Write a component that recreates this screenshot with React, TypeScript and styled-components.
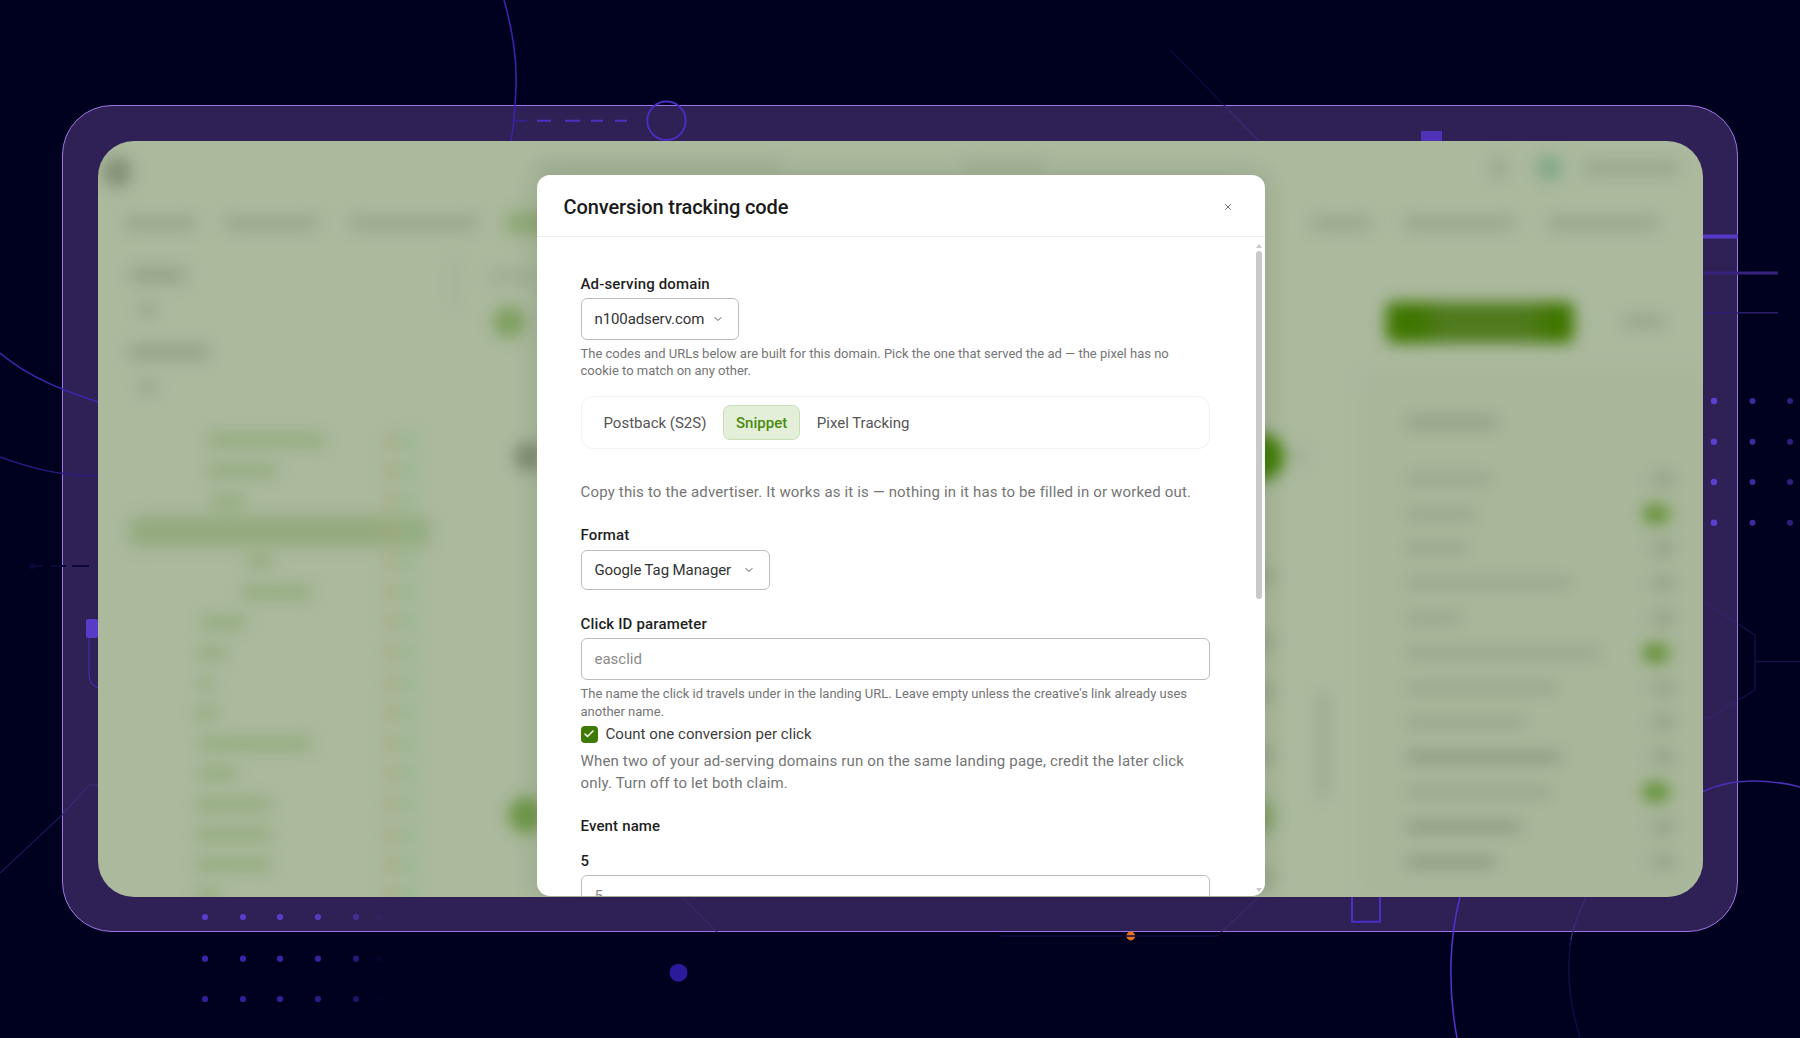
import React from 'react'
import styled, { createGlobalStyle } from 'styled-components'
import { Check, ChevronDown, X } from 'lucide-react'

const GlobalStyle = createGlobalStyle`
  html, body {
    margin: 0;
    padding: 0;
    background: #00001f;
  }
  * {
    box-sizing: border-box;
  }
`

const Page = styled.div`
  position: relative;
  width: 1800px;
  height: 1038px;
  padding: 105px 62px 106px;
  overflow: hidden;
  background: #00001f;
  font-family: Roboto, "Open Sans", sans-serif;
`

const Frame = styled.div`
  width: 100%;
  height: 100%;
  padding: 34.5px;
  border: 1.5px solid #a074e6;
  border-radius: 50px;
  background: #2f2056;
`

const Deco = styled.svg`
  position: absolute;
  top: 0;
  left: 0;
  z-index: 1;
`

const Panel = styled.div`
  position: relative;
  z-index: 2;
  width: 100%;
  height: 100%;
  overflow: hidden;
  border-radius: 36px;
  background: #abb99d;
`

/* the app behind the dialog, out of focus */
const Backdrop = styled.div`
  display: flex;
  flex-direction: column;
  height: 100%;
  filter: blur(7.5px);
`

const TopBar = styled.div`
  display: flex;
  align-items: center;
  height: 54px;
  padding: 0 32px 0 4px;
`

const Blob = styled.div<{ $w: number; $h?: number; $c?: string; $ml?: number }>`
  flex: none;
  width: ${p => p.$w}px;
  height: ${p => p.$h ?? 12}px;
  margin-left: ${p => p.$ml ?? 0}px;
  border-radius: 4px;
  background: ${p => p.$c ?? '#95a388'};
`

const Avatar = styled.div`
  flex: none;
  width: 30px;
  height: 32px;
  margin-top: 8px;
  border-radius: 50%;
  background: #849277;
`

const Spot = styled.div<{ $d: number; $c: string; $ml?: number }>`
  flex: none;
  width: ${p => p.$d}px;
  height: ${p => p.$d}px;
  margin-left: ${p => p.$ml ?? 0}px;
  border-radius: 50%;
  background: ${p => p.$c};
`

const NavBar = styled.div`
  display: flex;
  align-items: center;
  height: 56px;
`

const Main = styled.div`
  flex: 1;
  display: flex;
  min-height: 0;
`

const LeftCol = styled.div`
  flex: none;
  width: 331px;
  padding: 16px 0 0 32px;
`

const Heading = styled(Blob)`
  margin-bottom: 21px;
  height: 16px;
`

const SmallMark = styled(Blob)`
  margin-bottom: 28px;
  margin-left: 9px;
`

const Tree = styled.div`
  padding-top: 5px;
`

const TreeRow = styled.div<{ $active?: boolean }>`
  display: flex;
  align-items: center;
  height: 30.3px;
  border-radius: 6px;
  background: ${p => (p.$active ? '#94aa7e' : 'transparent')};
`

const TreeLabel = styled.div<{ $w: number; $ml: number }>`
  flex: none;
  width: ${p => p.$w}px;
  height: 13px;
  margin-left: ${p => p.$ml}px;
  border-radius: 4px;
  background: #93aa7d;
`

const TreeFigures = styled.div`
  display: flex;
  gap: 8px;
  margin-left: auto;
  margin-right: 15px;
`

const Figure = styled.div<{ $c: string }>`
  width: 10px;
  height: 16px;
  border-radius: 3px;
  background: ${p => p.$c};
`

const MidCol = styled.div`
  position: relative;
  flex: 1;
  display: flex;
  justify-content: space-between;
`

const MidLead = styled.div`
  padding: 6px 0 0 62px;
`

const MidTrail = styled.div`
  width: 120px;
  padding-top: 186px;
`

const MidRow = styled.div<{ $mt?: number }>`
  display: flex;
  align-items: center;
  gap: 10px;
  height: 40px;
  margin-top: ${p => p.$mt ?? 0}px;
`

const LeadDivider = styled.div`
  position: absolute;
  top: 9px;
  left: 24px;
  width: 4px;
  height: 47px;
  background: #9dab90;
`

const TrailScroller = styled.div`
  position: absolute;
  top: 442px;
  right: 33px;
  width: 8px;
  height: 104px;
  background: #98a68b;
`

const RightCol = styled.div`
  flex: none;
  width: 343px;
  display: flex;
  flex-direction: column;
`

const ActionRow = styled.div`
  display: flex;
  align-items: flex-start;
  height: 120px;
  padding: 33px 0 0 26px;
`

const MainAction = styled.div`
  width: 188px;
  height: 41px;
  margin-top: 18px;
  border-radius: 8px;
  background: linear-gradient(90deg, #3f7600 0 18%, #4f7a1d 30% 75%, #3f7600 88%);
`

const ActionText = styled(Blob)`
  margin-top: 32px;
`

const OptionsCard = styled.div`
  flex: 1;
  padding: 44px 30px 0 46px;
  border-radius: 14px 0 0 0;
  background: #a8b69a;
`

const OptionsTitle = styled(Blob)`
  margin-bottom: 32px;
  height: 15px;
`

const OptionRow = styled.div`
  display: flex;
  align-items: center;
  justify-content: space-between;
  height: 34.8px;
`

const Switch = styled.div<{ $on?: boolean }>`
  width: 30px;
  height: 18px;
  border-radius: 9px;
  background: ${p => (p.$on ? 'linear-gradient(90deg, #5a8c28 0 55%, #98b080 100%)' : 'linear-gradient(90deg, #a3b095 0 30%, #8a977d)')};
`

/* the dialog */
const Modal = styled.div`
  position: absolute;
  top: 34px;
  bottom: 1px;
  left: 439px;
  width: 728px;
  display: flex;
  flex-direction: column;
  overflow: hidden;
  border-radius: 13px;
  background: #fff;
  box-shadow: 0 0 26px rgba(40, 55, 30, 0.16);
`

const ModalHeader = styled.div`
  flex: none;
  display: flex;
  align-items: center;
  justify-content: space-between;
  height: 62px;
  padding: 4px 32px 0 27px;
  border-bottom: 1.5px solid #efefef;
`

const ModalTitle = styled.h2`
  margin: 0;
  font-size: 20px;
  font-weight: 500;
  letter-spacing: -0.1px;
  color: #1a1a1a;
`

const CloseButton = styled.button`
  display: flex;
  padding: 0;
  border: 0;
  background: none;
  color: #555;
`

const ModalBody = styled.div`
  flex: 1;
  min-height: 0;
  overflow: hidden;
  padding: 37px 55px 0 44px;
`

const Label = styled.div<{ $mt?: number }>`
  margin-top: ${p => p.$mt ?? 0}px;
  font-size: 15px;
  line-height: 20px;
  font-weight: 500;
  letter-spacing: 0.15px;
  color: #1f1f1f;
`

const SelectBox = styled.div<{ $w: number; $h: number; $mt?: number }>`
  display: flex;
  align-items: center;
  justify-content: space-between;
  width: ${p => p.$w}px;
  height: ${p => p.$h}px;
  margin-top: ${p => p.$mt ?? 4}px;
  padding: 0 14px 0 13px;
  border: 1.5px solid #bcbcbc;
  border-radius: 6px;
  font-size: 15px;
  letter-spacing: -0.1px;
  color: #333;

  svg {
    flex: none;
    color: #555;
  }
`

const Hint = styled.div`
  margin-top: 5px;
  font-size: 13px;
  line-height: 17.4px;
  color: #757575;
`

const TabGroup = styled.div`
  display: flex;
  align-items: center;
  gap: 4.6px;
  height: 53px;
  margin-top: 17px;
  padding: 0 10px;
  border: 1.5px solid #f2f2f2;
  border-radius: 12px;
`

const Tab = styled.div<{ $active?: boolean }>`
  display: flex;
  align-items: center;
  height: 35px;
  padding: 0 ${p => (p.$active ? 12 : 11)}px;
  border: 1.5px solid ${p => (p.$active ? '#c9e0b6' : 'transparent')};
  border-radius: 7px;
  background: ${p => (p.$active ? '#e4efd9' : 'transparent')};
  font-size: 15px;
  font-weight: ${p => (p.$active ? 500 : 400)};
  color: ${p => (p.$active ? '#4a8a10' : '#555')};
`

const Lead = styled.div`
  margin-top: 32px;
  font-size: 15px;
  line-height: 22px;
  letter-spacing: 0.165px;
  color: #757575;
`

const TextInput = styled.div`
  display: flex;
  align-items: center;
  height: 42px;
  margin-top: 4px;
  padding: 0 13px;
  border: 1.5px solid #bcbcbc;
  border-radius: 6px;
  font-size: 15px;
  color: #8a8a8a;
`

const CheckRow = styled.div`
  display: flex;
  align-items: center;
  gap: 8px;
  height: 20px;
  margin-top: 4px;
  font-size: 15px;
  letter-spacing: 0.05px;
  color: #3d3d3d;
`

const CheckMark = styled.span`
  display: flex;
  align-items: center;
  justify-content: center;
  width: 17px;
  height: 17px;
  border-radius: 4px;
  background: #3f7a00;
  color: #fff;
`

const CheckNote = styled.div`
  margin-top: 6px;
  font-size: 15px;
  line-height: 22px;
  letter-spacing: 0.165px;
  color: #757575;
`

const Scroll = styled.div`
  position: absolute;
  top: 69px;
  right: 3px;
  bottom: 4px;
  width: 6px;
`

const ScrollThumb = styled.div`
  width: 6px;
  height: 348px;
  margin-top: 7px;
  border-radius: 3px;
  background: #c9c9c9;
`

const ScrollArrow = styled.div<{ $down?: boolean }>`
  position: absolute;
  ${p => (p.$down ? 'bottom: 0;' : 'top: 0;')}
  left: 0;
  border-left: 3px solid transparent;
  border-right: 3px solid transparent;
  ${p => (p.$down ? 'border-top: 4px solid #c9c9c9;' : 'border-bottom: 4px solid #c9c9c9;')}
`

const dotXs = [205, 243, 280, 318, 356, 379]
const dotRows = [
  { y: 917, fill: '#5a3dc8', o: [1, 1, 1, 0.9, 0.55, 0.08] },
  { y: 958.7, fill: '#3a25a8', o: [1, 1, 1, 0.9, 0.65, 0.08] },
  { y: 999, fill: '#33209a', o: [1, 1, 1, 0.85, 0.6, 0.06] },
]
const sideDots = [401, 441.7, 482, 522.7]

const Backgroundart = () => (
  <Deco width={1800} height={1038} viewBox="0 0 1800 1038" fill="none">
    {/* arcs */}
    <path d="M504 0 C514 35 517 62 516 88 C515 108 514 124 511 141" stroke="#3a23a8" strokeWidth={1.6} />
    <path d="M0 353 C30 378 62 390 98 402" stroke="#3d27b0" strokeWidth={1.6} />
    <path d="M0 457 C30 468 60 476 98 476" stroke="#2a1a80" strokeWidth={1.4} />
    <path d="M1460 897 C1450 935 1447 985 1457 1038" stroke="#4f32c8" strokeWidth={1.6} />
    <path d="M1586 897 C1577 918 1572 930 1570 945" stroke="#3b2a74" strokeWidth={1.4} />
    <path d="M1571 940 C1566 975 1570 1005 1580 1038" stroke="#120c48" strokeWidth={1.4} />
    <path d="M1702 792 C1720 783 1735 781 1752 781 C1770 781 1785 783 1800 787" stroke="#4a30b4" strokeWidth={1.6} />

    {/* dashes and the ring on the top band */}
    <path d="M514 120.7 H527" stroke="#35238a" strokeWidth={2} />
    <path d="M537 120.7 H551 M565 120.7 H580 M591 120.7 H603 M615 120.7 H627" stroke="#4b30c0" strokeWidth={2} />
    <circle cx={666.5} cy={120.7} r={19.2} stroke="#4a2fc4" strokeWidth={1.8} />
    <rect x={1421} y={131} width={21} height={12} fill="#4f32b8" />

    {/* lines on the right */}
    <rect x={1702} y={234.5} width={36} height={4} fill="#5a3bc8" />
    <rect x={1702} y={271.5} width={76} height={3} fill="#37237e" />
    <rect x={1702} y={312} width={76} height={1.5} fill="#2c1e6c" />
    <path d="M1170 50 L1224 105" stroke="#0e0a3e" strokeWidth={1.2} />
    <path d="M1224 105 L1259 141" stroke="#3b2a74" strokeWidth={1.2} />
    <path d="M1702 603 H1706 L1755 635 V690 L1709 718 H1702 M1755 661.7 H1800" stroke="#3f2b8e" strokeWidth={1.2} opacity={0.4} />

    {/* dots */}
    {sideDots.map(y => (
      <React.Fragment key={y}>
        <circle cx={1714} cy={y} r={3.2} fill="#5b3fd0" />
        <circle cx={1752.5} cy={y} r={3} fill="#3d2a9c" />
        <circle cx={1790} cy={y} r={3} fill="#2e1f7f" />
      </React.Fragment>
    ))}
    {dotRows.map(row =>
      dotXs.map((x, i) => <circle key={`${row.y}-${x}`} cx={x} cy={row.y} r={3.1} fill={row.fill} opacity={row.o[i]} />),
    )}
    <circle cx={678.5} cy={972.7} r={9} fill="#2b1b9c" />
    <circle cx={1130.8} cy={936} r={4.4} fill="#e8701f" />
    <path d="M1000 936 H1218" stroke="#0e0a42" strokeWidth={1.4} />

    {/* lower left */}
    <rect x={86} y={619} width={12} height={19} rx={2} fill="#5a3bc8" />
    <path d="M89 638 V675 Q89 684 98 688" stroke="#3f2b9e" strokeWidth={1.4} />
    <path d="M0 873 L62 815" stroke="#1f1658" strokeWidth={1.2} />
    <path d="M62 815 L89 785 H98" stroke="#3b2a74" strokeWidth={1.2} />
    <path d="M32 566 H42 M50 566 H66 M72 566 H89" stroke="#0c0836" strokeWidth={2} />
    <circle cx={32} cy={566} r={3} fill="#0c0836" />
    <path d="M683 898 L717 932" stroke="#392868" strokeWidth={1.2} />
    <path d="M1259 897 L1221 932" stroke="#392868" strokeWidth={1.2} />

    {/* outline square under the panel */}
    <path d="M1352 890 V921.7 H1380 V890" stroke="#4a2fc4" strokeWidth={2} />
  </Deco>
)

const treeRows = [
  { w: 117, ml: 78 },
  { w: 68, ml: 78 },
  { w: 34, ml: 81 },
  { w: 0, ml: 0, active: true },
  { w: 23, ml: 118 },
  { w: 69, ml: 112 },
  { w: 44, ml: 71 },
  { w: 26, ml: 69 },
  { w: 14, ml: 69 },
  { w: 20, ml: 66 },
  { w: 112, ml: 69 },
  { w: 37, ml: 69 },
  { w: 75, ml: 66 },
  { w: 75, ml: 66 },
  { w: 75, ml: 66 },
  { w: 24, ml: 66 },
]

const optionRows = [
  { w: 85 },
  { w: 70, on: true },
  { w: 62 },
  { w: 165 },
  { w: 55 },
  { w: 195, on: true },
  { w: 150 },
  { w: 120 },
  { w: 155, dark: true },
  { w: 145, on: true },
  { w: 115, dark: true },
  { w: 90, dark: true },
]

const BlurredApp = () => (
  <Backdrop>
    <TopBar>
      <Avatar />
      <Blob $w={243} $c="#a0ae92" $ml={406} />
      <Blob $w={80} $c="#a0ae92" $ml={183} />
      <Blob $w={12} $h={20} $ml={449} />
      <Spot $d={24} $c="#7ea686" $ml={32} />
      <Blob $w={94} $ml={23} />
    </TopBar>
    <NavBar>
      <Blob $w={72} $ml={26} />
      <Blob $w={92} $ml={29} />
      <Blob $w={126} $ml={34} />
      <Blob $w={60} $h={22} $c="#8fa876" $ml={29} />
      <Blob $w={58} $ml={746} />
      <Blob $w={109} $ml={34} />
      <Blob $w={109} $ml={35} />
    </NavBar>
    <Main>
      <LeftCol>
        <Heading $w={55} />
        <SmallMark $w={17} />
        <Heading $w={78} />
        <SmallMark $w={17} />
        <Tree>
          {treeRows.map((r, i) => (
            <TreeRow key={i} $active={r.active}>
              {!r.active && <TreeLabel $w={r.w} $ml={r.ml} />}
              <TreeFigures>
                <Figure $c="#a8a97f" />
                <Figure $c="#8fb88c" />
              </TreeFigures>
            </TreeRow>
          ))}
        </Tree>
      </LeftCol>
      <MidCol>
        <LeadDivider />
        <MidLead>
          <MidRow>
            <Blob $w={45} $c="#9dab90" />
          </MidRow>
          <MidRow $mt={5}>
            <Spot $d={32} $c="#7f9f60" $ml={2} />
          </MidRow>
          <MidRow $mt={95}>
            <Spot $d={30} $c="#7f8c72" $ml={23} />
          </MidRow>
          <MidRow $mt={318}>
            <Spot $d={36} $c="#6e9748" $ml={17} />
          </MidRow>
        </MidLead>
        <MidTrail>
          <MidRow>
            <Spot $d={48} $c="#3f7d05" $ml={-4} />
            <Blob $w={12} $h={14} $c="#9dab90" />
          </MidRow>
          <MidRow $mt={80}>
            <Blob $w={34} $h={18} $ml={-2} />
          </MidRow>
          <MidRow $mt={25}>
            <Blob $w={34} $h={18} $ml={-2} />
          </MidRow>
          <MidRow $mt={11}>
            <Blob $w={34} $h={18} $ml={-2} />
          </MidRow>
          <MidRow $mt={22}>
            <Blob $w={34} $h={18} $ml={-2} />
          </MidRow>
          <MidRow $mt={22}>
            <Spot $d={38} $c="#7f9f60" $ml={-4} />
          </MidRow>
          <MidRow $mt={21}>
            <Blob $w={34} $h={18} $ml={-2} />
          </MidRow>
        </MidTrail>
        <TrailScroller />
      </MidCol>
      <RightCol>
        <ActionRow>
          <MainAction />
          <ActionText $w={40} $ml={50} />
        </ActionRow>
        <OptionsCard>
          <OptionsTitle $w={92} />
          {optionRows.map((r, i) => (
            <OptionRow key={i}>
              <Blob $w={r.w} $c={r.dark ? '#8f9b82' : '#98a68b'} />
              <Switch $on={r.on} />
            </OptionRow>
          ))}
        </OptionsCard>
      </RightCol>
    </Main>
  </Backdrop>
)

const App = () => (
  <Page>
    <GlobalStyle />
    <Frame>
      <Panel>
        <BlurredApp />
        <Modal>
          <ModalHeader>
            <ModalTitle>Conversion tracking code</ModalTitle>
            <CloseButton aria-label="Close">
              <X size={10} strokeWidth={2} />
            </CloseButton>
          </ModalHeader>
          <ModalBody>
            <Label>Ad-serving domain</Label>
            <SelectBox $w={158} $h={42}>
              n100adserv.com
              <ChevronDown size={12} />
            </SelectBox>
            <Hint>
              The codes and URLs below are built for this domain. Pick the one that served the ad — the pixel has no
              cookie to match on any other.
            </Hint>
            <TabGroup>
              <Tab>Postback (S2S)</Tab>
              <Tab $active>Snippet</Tab>
              <Tab>Pixel Tracking</Tab>
            </TabGroup>
            <Lead>Copy this to the advertiser. It works as it is — nothing in it has to be filled in or worked out.</Lead>
            <Label $mt={22}>Format</Label>
            <SelectBox $w={189} $h={40} $mt={5}>
              Google Tag Manager
              <ChevronDown size={12} />
            </SelectBox>
            <Label $mt={24}>Click ID parameter</Label>
            <TextInput>easclid</TextInput>
            <Hint>
              The name the click id travels under in the landing URL. Leave empty unless the creative's link already
              uses another name.
            </Hint>
            <CheckRow>
              <CheckMark>
                <Check size={12} strokeWidth={3} />
              </CheckMark>
              Count one conversion per click
            </CheckRow>
            <CheckNote>
              When two of your ad-serving domains run on the same landing page, credit the later click only. Turn off to
              let both claim.
            </CheckNote>
            <Label $mt={22}>Event name</Label>
            <Label $mt={15}>5</Label>
            <TextInput>5</TextInput>
          </ModalBody>
          <Scroll>
            <ScrollArrow />
            <ScrollThumb />
            <ScrollArrow $down />
          </Scroll>
        </Modal>
      </Panel>
    </Frame>
    <Backgroundart />
  </Page>
)

export default App
